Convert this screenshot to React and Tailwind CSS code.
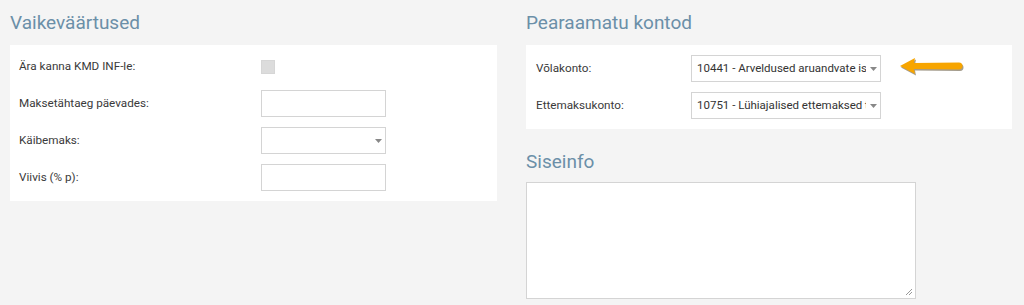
const Caret = () => (
    <svg width="7" height="4" viewBox="0 0 7 4" className="shrink-0" aria-hidden>
        <path d="M0 0 L7 0 L3.5 4 Z" fill="#888" />
    </svg>
);

const Select = ({ value, width = "w-[125px]" }) => (
    <div className={`${width} h-[27px] border border-[#d4d4d4] bg-white flex items-center pl-[5px] pr-[3px] gap-[4px]`}>
        <span className="flex-1 overflow-hidden whitespace-nowrap text-[11.5px] text-[#333]">{value}</span>
        <Caret />
    </div>
);

const Input = () => <div className="w-[125px] h-[27px] border border-[#d4d4d4] bg-white" />;

const Row = ({ label, labelW, children }) => (
    <div className="flex items-center h-[27px]">
        <span className={`${labelW} shrink-0 text-[11.7px] text-[#3a3a3a]`}>{label}</span>
        {children}
    </div>
);

const Heading = ({ children }) => (
    <h2 className="text-[19px] leading-[22px] text-[#6b8fa8] h-[45px] pt-[12px]">{children}</h2>
);

const App = () => {
    return (
        <main
            className="w-[1024px] h-[305px] bg-[#f4f4f4] overflow-hidden flex gap-[29px] pl-[10px]"
            style={{ fontFamily: "Roboto, 'Liberation Sans', sans-serif" }}
        >
            {/* LEFT: defaults */}
            <section className="w-[487px]">
                <Heading>Vaikeväärtused</Heading>
                <div className="bg-white pl-[9px] pt-[8px] pb-[10px] flex flex-col gap-[10px]">
                    <Row label="Ära kanna KMD INF-le:" labelW="w-[242px]">
                        <div className="w-[14px] h-[14px] bg-[#dcdcdc] border border-[#d6d6d6]" />
                    </Row>
                    <Row label="Maksetähtaeg päevades:" labelW="w-[242px]">
                        <Input />
                    </Row>
                    <Row label="Käibemaks:" labelW="w-[242px]">
                        <Select value="" />
                    </Row>
                    <Row label="Viivis (% p):" labelW="w-[242px]">
                        <Input />
                    </Row>
                </div>
            </section>

            {/* RIGHT: ledger accounts + notes */}
            <section className="w-[486px]">
                <Heading>Pearaamatu kontod</Heading>
                <div className="bg-white pl-[10px] pt-[10px] pb-[10px] flex flex-col gap-[10px]">
                    <Row label="Võlakonto:" labelW="w-[155px]">
                        <Select width="w-[190px]" value="10441 - Arveldused aruandvate isikutega" />
                        <svg width="68" height="20" viewBox="0 0 68 20" className="ml-[17px] mt-[-4px]" aria-hidden>
                            <path
                                d="M2 9 L17 1 L16 6 L61 5.5 Q64.5 5.8 64.5 9 Q64.5 12.2 61 12.5 L16 12 L17 17 Z"
                                fill="#4a3a1a"
                                opacity="0.5"
                                transform="translate(1 1.5)"
                            />
                            <path
                                d="M2 9 L17 1 L16 6 L61 5.5 Q64.5 5.8 64.5 9 Q64.5 12.2 61 12.5 L16 12 L17 17 Z"
                                fill="#f7a500"
                            />
                        </svg>
                    </Row>
                    <Row label="Ettemaksukonto:" labelW="w-[155px]">
                        <Select width="w-[190px]" value="10751 - Lühiajalised ettemaksed tarnijatele" />
                    </Row>
                </div>

                <h2 className="text-[19px] leading-[22px] text-[#6b8fa8] mt-[22px] mb-[9px]">Siseinfo</h2>
                <div className="relative w-[390px] h-[117px] border border-[#d4d4d4] bg-white">
                    <svg width="8" height="8" viewBox="0 0 8 8" className="absolute right-[2px] bottom-[2px]" aria-hidden>
                        <path d="M7 1 L1 7 M7 4 L4 7" stroke="#999" strokeWidth="1" />
                    </svg>
                </div>
            </section>
        </main>
    );
};

export default App;
